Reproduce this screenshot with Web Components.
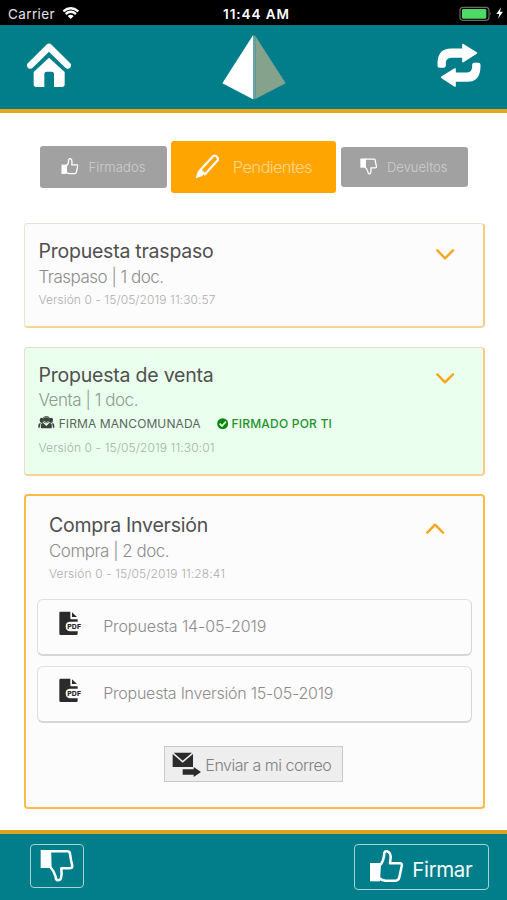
<!DOCTYPE html>
<html lang="es">
<head>
<meta charset="utf-8">
<title>Propuestas</title>
<style>
  html, body { margin: 0; padding: 0; background: #fff; }
  body { width: 507px; height: 900px; overflow: hidden; font-family: Inter, "Liberation Sans", sans-serif; }
</style>
</head>
<body>
<sign-app></sign-app>

<script>
const define = (name, html, setup) => {
  const template = document.createElement('template');
  template.innerHTML = html;
  customElements.define(name, class extends HTMLElement {
    connectedCallback() {
      if (this.shadowRoot) return;
      this.attachShadow({ mode: 'open' }).append(template.content.cloneNode(true));
      if (setup) setup.call(this, this.shadowRoot);
    }
  });
};

const ICONS = {
  home: [[80, 130, 133, 133], '<path d="M90 197L146 142L202 197" fill="none" stroke="#fff" stroke-width="20" stroke-linecap="round" stroke-linejoin="round"/><path fill="#fff" d="M146 174L193 217V254Q193 262 185 262H161V224Q161 216 154 216H139Q132 216 132 224V262H108Q100 262 100 254V217Z"/>'],
  pyramid: [[666, 105, 192, 195], '<path fill="#fff" d="M759 106V298L667 250Z"/><path fill="#85a28c" d="M766 108L857 250L766 297Z"/><path fill="#6aa5a3" d="M759 106L766 108V297L759 298Z"/>'],
  sync: [[550, 130, 132, 133], '<g fill="#fff" stroke="#fff" stroke-width="5" stroke-linejoin="round"><path d="M554 198V190Q555 149 592 149H628V135L668 160L628 186V172H592Q575 173 574 190V198Q574 202 564 202Q554 202 554 198Z"/><path d="M678 195V202Q677 244 641 244H604V259L564 233L604 208V221H641Q657 220 658 202V195Q658 191 668 191Q678 191 678 195Z"/></g>'],
  wifi: [[186, 18, 53, 40], '<g fill="none" stroke="#fff" stroke-width="7"><path d="M190 34Q212 15 235 34"/><path d="M197 42Q212 29 228 42"/></g><path fill="#fff" d="M203 48Q212 41 221 48L212 57Z"/>'],
  battery: [[614, 16, 98, 46], '<rect x="617" y="20" width="87" height="39" rx="9" fill="none" stroke="#6b6b6b" stroke-width="3.5"/><rect x="623" y="25" width="73" height="29" rx="4" fill="#4cd964"/><path fill="#6b6b6b" d="M707 33Q712 39 707 45Z"/>'],
  bolt: [[721, 22, 22, 36], '<path fill="#fff" d="M736 23L722 43H731L727 57L742 36H733Z"/>'],
  up: [[207, 90, 103, 97], '<path fill="#fff" d="M210 129H240V184H210Z"/><path d="M239 137Q252 124 253 98Q254 93 262 94Q272 98 272 112L270 130H300Q308 130 305 139L298 172Q296 182 287 182H256Q244 181 237 174Z" fill="none" stroke="#fff" stroke-width="7.5" stroke-linejoin="round"/>'],
  down: [[118, 88, 103, 99], '<path fill="#fff" d="M120 91H151V145H120Z"/><path d="M148 95H201Q208 96 208 103L211 121L215 139Q215 146 206 146H182Q184 163 181 175Q179 182 172 182Q165 181 165 171Q162 157 149 142Z" fill="none" stroke="#fff" stroke-width="7.5" stroke-linejoin="round"/>'],
  pencil: [[495, 70, 73, 75], '<path d="M511 118L550 76Q554 73 558 76L563 82Q566 85 563 89L525 131Z" fill="none" stroke="#fff" stroke-width="6.5" stroke-linejoin="round"/><path fill="#fff" d="M504 120Q509 117 514 123L519 130Q520 135 516 137L497 143Z"/>'],
  group: [[70, 226, 50, 38], '<g fill="#3a443c"><circle cx="95" cy="239" r="9"/><path d="M79 263Q76 247 86 247L95 256L104 247Q114 247 111 263Z"/><path d="M81 231Q88 231 87 239Q88 247 81 247Q74 245 75 238Q76 231 81 231ZM109 231Q116 231 115 239Q115 247 109 247Q102 246 103 238Q103 231 109 231Z"/><path d="M75 248H79Q75 254 75 261H71Q70 250 75 248ZM111 248H115Q120 250 119 261H115Q115 254 111 248Z"/></g><path d="M86 238Q83 228 95 228Q107 228 104 238" stroke="#3a443c" stroke-width="3" fill="none"/><path d="M88 242Q95 249 102 242" stroke="#eafdeb" stroke-width="2" fill="none"/>'],
  check: [[54, 232, 34, 34], '<circle cx="71" cy="249" r="16.5" fill="#0a850f"/><path d="M62 249L69 256L81 243" fill="none" stroke="#eafeee" stroke-width="5"/>'],
  pdf: [[133, 379, 68, 75], '<path fill="#2b2b2b" d="M137 381H167V401Q167 404 170 404H189V411H165Q153 412 153 425Q153 438 165 440H189V447Q189 451 185 451H138Q134 451 134 447V385Q134 381 137 381ZM172 383L187 397H172Z"/><text x="158" y="433" textLength="41" lengthAdjust="spacingAndGlyphs" font-family="Inter, sans-serif" font-size="20" font-weight="800" fill="#2b2b2b">PDF</text>'],
  mail: [[472, 293, 88, 76], '<path fill="#2b2b2b" d="M477 295H532L504 319ZM474 299L504 325L535 299V338H474ZM504 345H537V338L559 353L537 368V361H504Z"/>'],
  chevdown: [[708, 97, 56, 33], '<path d="M712 101L735 125L759 101" fill="none" stroke="#f8a51b" stroke-width="7" stroke-linecap="round" stroke-linejoin="round"/>'],
  chevup: [[708, 97, 56, 33], '<path d="M712 126L735 102L759 126" fill="none" stroke="#f8a51b" stroke-width="7" stroke-linecap="round" stroke-linejoin="round"/>']
};

/* Vector icon; "width" sets the drawn width in pixels, height follows the view box. */
define('ui-icon', `<style>:host{display:block;flex:none}svg{display:block}</style><svg></svg>`, function (root) {
  const [box, body] = ICONS[this.getAttribute('name')];
  const svg = root.querySelector('svg');
  const w = +this.getAttribute('width') || box[2] / 3;
  svg.setAttribute('viewBox', box.join(' '));
  svg.setAttribute('width', w);
  svg.setAttribute('height', w * box[3] / box[2]);
  svg.innerHTML = body;
});

/* Single-line label whose tracking is adjusted to fill "measure" pixels. */
define('ui-label', `<style>:host{display:block;white-space:nowrap;flex:none}span{display:inline-block}</style><span><slot></slot></span>`, function (root) {
  const span = root.querySelector('span');
  const target = +this.getAttribute('measure');
  const count = this.textContent.length;
  const width = span.getBoundingClientRect().width;
  if (target && width) span.style.letterSpacing = ((target - width) / count).toFixed(3) + 'px';
});

define('status-bar', `<style>
  :host{display:grid;grid-template-columns:1fr auto 1fr;align-items:center;height:25px;background:#000;color:#fff;padding:0 4px 0 8px;box-sizing:border-box;font-size:13.5px;line-height:25px}
  .l,.r{display:flex;align-items:center}
  .l{gap:7px;color:#e4e4e4;padding-top:3px}.c{font-weight:600;padding:3px 0 0 2px}
  .l ui-label,.c{line-height:22px}
  .l ui-icon{margin-top:-2px}
  .r{justify-content:flex-end;gap:4px;padding-top:2px}
</style>
<div class="l"><ui-label measure="47">Carrier</ui-label><ui-icon name="wifi"></ui-icon></div>
<ui-label class="c" measure="67">11:44 AM</ui-label>
<div class="r"><ui-icon name="battery"></ui-icon><ui-icon name="bolt"></ui-icon></div>`);

define('app-header', `<style>
  :host{display:grid;grid-template-columns:1fr auto 1fr;align-items:center;height:88px;box-sizing:border-box;background:#017e89;border-bottom:4px solid #e8a519;padding:0 26px 0 26.5px}
  [name=home],[name=sync]{margin-bottom:3px}
  [name=pyramid]{margin-top:1px}
  [name=sync]{justify-self:end}
</style>
<ui-icon name="home"></ui-icon><ui-icon name="pyramid"></ui-icon><ui-icon name="sync"></ui-icon>`);

define('tab-button', `<style>
  :host{display:flex;align-items:center;box-sizing:border-box;width:127px;height:42px;border-radius:3px;background:#a1a1a1;color:#cfcfcf;font-size:13px;font-weight:300;padding-left:21px;gap:10.5px}
  :host([small]){height:40px;padding-left:19px;gap:10px}
  :host([active]){width:165px;height:52px;background:#ffa502;color:#ffd78c;font-size:16.5px;padding-left:24px;gap:13.5px}
  ::slotted(ui-icon){margin-top:-1px}
</style><slot></slot>`);

define('tab-bar', `<style>:host{display:flex;align-items:center;justify-content:center;gap:4.5px;height:52px}</style><slot></slot>`);

define('proposal-card', `<style>
  :host{display:block;box-sizing:border-box;margin:0 22px 0 24px;height:105px;border:1.5px solid #e9e3d3;border-right:2px solid #f7cc80;border-bottom:2.5px solid #f7d491;border-radius:4px;background:#fcfcfc;padding:14px 28px 0 13.5px;color:#8c8c8c}
  :host([signed]){height:129px;background:#eaffed;border-top-color:#e8dfc9;border-left-color:#e8dfc9;color:#8b9b8d}
  :host([open]){height:315px;border:2px solid #fbbb47;border-right-width:2.5px;padding:16px 11px 0 11px}
  header{display:flex;justify-content:space-between}
  :host([open]) header{padding:0 27px 0 12px}
  ui-icon{margin-top:11px}
  .t{font-size:19.5px;line-height:26px;color:#505050}
  .s{font-size:17px;line-height:26px;font-weight:300}
  .v{font-size:12px;line-height:20px;font-weight:300;color:#adadad}
  :host([signed]) .v{color:#a3b3a5;margin-top:2.5px}
  :host([signed]) .s{line-height:24px}
</style>
<header><div>
  <div class="t"><slot name="title"></slot></div>
  <div class="s"><slot name="summary"></slot></div>
  <slot name="badges"></slot>
  <div class="v"><slot name="version"></slot></div>
</div><span class="chev"></span></header>
<slot></slot>`, function (root) {
  const icon = document.createElement('ui-icon');
  icon.setAttribute('name', this.hasAttribute('open') ? 'chevup' : 'chevdown');
  root.querySelector('.chev').replaceWith(icon);
});

define('badge-row', `<style>:host{display:flex;align-items:center;height:23.5px;font-size:12px;gap:4px;color:#5a675c;line-height:23px}
  .ok{color:#22932a;font-weight:500;margin-left:-1px}
  [name=group]{margin:-3px 0 0 -.5px}
  [name=check]{margin-left:12.5px}</style>
<ui-icon name="group"></ui-icon><ui-label measure="142">FIRMA MANCOMUNADA</ui-label>
<ui-icon name="check"></ui-icon><ui-label class="ok" measure="100.5">FIRMADO POR TI</ui-label>`);

define('doc-row', `<style>
  :host{display:flex;align-items:center;box-sizing:border-box;height:57px;border:1.5px solid #e0e0e0;border-bottom:2px solid #d6d6d6;border-right-color:#d6d6d6;border-radius:6px;background:#fcfcfc;padding-left:21px;gap:21.5px;font-size:16px;font-weight:300;color:#8c8c8c;margin-bottom:10px}
  ui-icon{margin-top:-7px}
  ::slotted(ui-label){margin-top:-2px}
</style><ui-icon name="pdf"></ui-icon><slot></slot>`);

define('mail-button', `<style>
  :host{display:flex;align-items:center;box-sizing:border-box;width:179px;height:36px;border:1px solid #c9c9c9;background:#eee;margin:23px auto 0 127px;padding-left:7px;gap:4px;font-size:16px;font-weight:300;color:#808080}
  ui-icon{margin-top:1px}
  ::slotted(ui-label){margin-top:2px}
</style><ui-icon name="mail"></ui-icon><slot></slot>`);

define('action-button', `<style>
  :host{display:flex;align-items:center;box-sizing:border-box;height:45px;border:1.5px solid #a6d3d6;border-radius:4px;color:#f2fafa;font-size:20.5px;padding:0 9px 0 14px;gap:9px}
  ::slotted(ui-icon){margin-top:-1px}
  ::slotted(ui-label){margin-top:4px}
</style><slot></slot>`);

define('app-footer', `<style>
  :host{display:flex;justify-content:space-between;align-items:flex-start;box-sizing:border-box;height:70px;border-top:4px solid #dfa41d;background:#017e89;padding:10px 18px 0 30px;margin-top:auto}
</style><slot></slot>`);

define('sign-app', `<style>
  :host{display:flex;flex-direction:column;height:900px;background:#fff}
  status-bar,app-header,tab-bar,main,app-footer{flex:none}
  tab-bar{margin-top:28px}
  main{display:flex;flex-direction:column;gap:19px;margin-top:30px}
</style>
<status-bar></status-bar>
<app-header></app-header>
<tab-bar>
  <tab-button><ui-icon name="up" width="17.5"></ui-icon><ui-label measure="57">Firmados</ui-label></tab-button>
  <tab-button active><ui-icon name="pencil"></ui-icon><ui-label measure="79">Pendientes</ui-label></tab-button>
  <tab-button small><ui-icon name="down" width="17.5"></ui-icon><ui-label measure="60.5">Devueltos</ui-label></tab-button>
</tab-bar>
<main>
  <proposal-card>
    <ui-label slot="title" measure="175">Propuesta traspaso</ui-label>
    <ui-label slot="summary" measure="125">Traspaso | 1 doc.</ui-label>
    <ui-label slot="version" measure="177">Versión 0 - 15/05/2019 11:30:57</ui-label>
  </proposal-card>
  <proposal-card signed>
    <ui-label slot="title" measure="175">Propuesta de venta</ui-label>
    <ui-label slot="summary" measure="99.5">Venta | 1 doc.</ui-label>
    <badge-row slot="badges"></badge-row>
    <ui-label slot="version" measure="176">Versión 0 - 15/05/2019 11:30:01</ui-label>
  </proposal-card>
  <proposal-card open style="margin-top:-1px">
    <ui-label slot="title" measure="159">Compra Inversión</ui-label>
    <ui-label slot="summary" measure="120">Compra | 2 doc.</ui-label>
    <ui-label slot="version" measure="176">Versión 0 - 15/05/2019 11:28:41</ui-label>
    <doc-row style="margin-top:15px"><ui-label measure="163">Propuesta 14-05-2019</ui-label></doc-row>
    <doc-row><ui-label measure="230">Propuesta Inversión 15-05-2019</ui-label></doc-row>
    <mail-button><ui-label measure="126">Enviar a mi correo</ui-label></mail-button>
  </proposal-card>
</main>
<app-footer>
  <action-button style="width:54px;padding:0 0 0 9px;height:44px"><ui-icon name="down"></ui-icon></action-button>
  <action-button style="width:135px;height:46px"><ui-icon name="up"></ui-icon><ui-label measure="60">Firmar</ui-label></action-button>
</app-footer>`);
</script>
</body>
</html>
